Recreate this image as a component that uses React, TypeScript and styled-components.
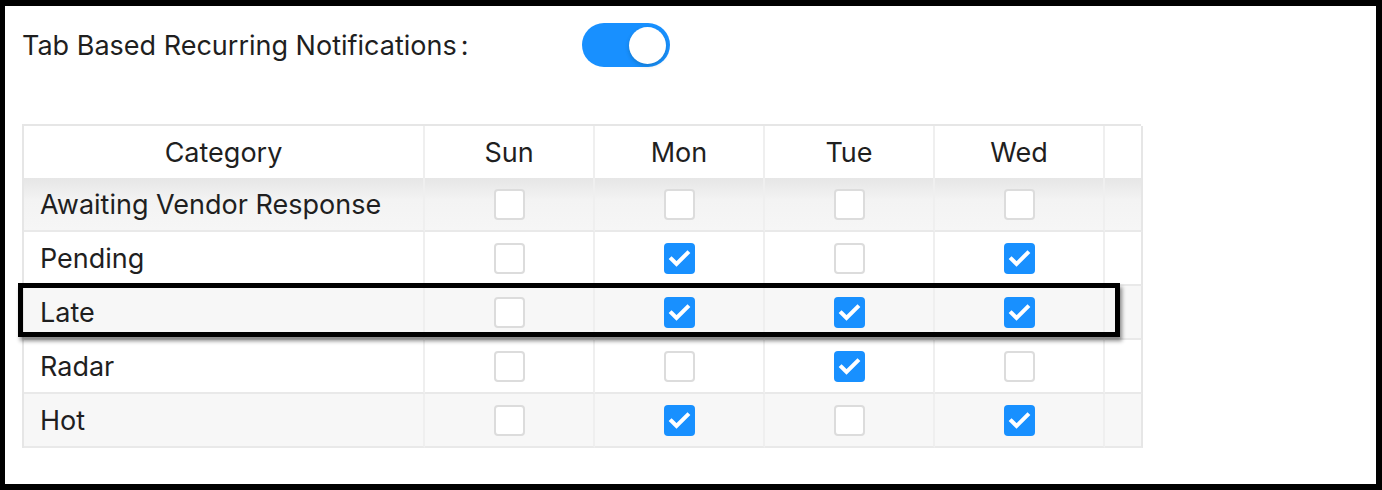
import React from "react";
import styled, { createGlobalStyle } from "styled-components";

const GlobalStyle = createGlobalStyle`
  html, body {
    margin: 0;
    padding: 0;
    background: #fff;
  }
  * {
    box-sizing: border-box;
  }
`;

const days = ["Sun", "Mon", "Tue", "Wed"];

const rows = [
  { name: "Awaiting Vendor Response", checks: [false, false, false, false] },
  { name: "Pending", checks: [false, true, false, true] },
  { name: "Late", checks: [false, true, true, true] },
  { name: "Radar", checks: [false, false, true, false] },
  { name: "Hot", checks: [false, true, false, true] },
];

const Checkbox: React.FC<{ checked: boolean }> = ({ checked }) => (
  <Box checked={checked}>
    {checked && (
      <svg width="31" height="31" viewBox="0 0 31 31">
        <polyline
          points="7.5,16 12.5,21 23.5,10"
          fill="none"
          stroke="#fff"
          strokeWidth="4"
          strokeLinecap="square"
        />
      </svg>
    )}
  </Box>
);

const App: React.FC = () => {
  return (
    <Frame>
      <GlobalStyle />
      <SettingRow>
        <Label>
          Tab Based Recurring Notifications<Colon>:</Colon>
        </Label>
        <Switch>
          <Knob />
        </Switch>
      </SettingRow>

      <TableWrap>
        <Grid>
          <HeadCell>Category</HeadCell>
          {days.map((d) => (
            <HeadCell key={d}>{d}</HeadCell>
          ))}
          <HeadCell last />

          {rows.map((r, i) => (
            <React.Fragment key={r.name}>
              <Cell striped={i % 2 === 0} first={i === 0} align="left">
                {r.name}
              </Cell>
              {r.checks.map((c, j) => (
                <Cell key={j} striped={i % 2 === 0} first={i === 0}>
                  <Checkbox checked={c} />
                </Cell>
              ))}
              <Cell striped={i % 2 === 0} first={i === 0} last />
            </React.Fragment>
          ))}
        </Grid>
        {/* annotation box drawn over the "Late" row */}
        <Highlight />
      </TableWrap>
    </Frame>
  );
};

export default App;

const Frame = styled.div`
  width: 1382px;
  height: 490px;
  border: 6px solid #000;
  border-left-width: 5px;
  background: #fff;
  padding: 17px 0 0 17px;
  font-family: Inter, "Liberation Sans", sans-serif;
  color: #1f1f1f;
`;

const SettingRow = styled.div`
  display: flex;
  align-items: center;
  height: 44px;
`;

const Label = styled.div`
  width: 560px;
  font-size: 27px;
  color: #1f1f1f;
`;

const Colon = styled.span`
  margin-left: 4px;
`;

const Switch = styled.div`
  width: 88px;
  height: 44px;
  border-radius: 22px;
  background: #1890ff;
  display: flex;
  align-items: center;
  justify-content: flex-end;
  padding-right: 4px;
`;

const Knob = styled.div`
  width: 37px;
  height: 37px;
  border-radius: 50%;
  background: #fff;
  box-shadow: 0 2px 4px rgba(0, 35, 11, 0.2);
`;

const TableWrap = styled.div`
  position: relative;
  margin-top: 57px;
  width: 1119px;
`;

const Grid = styled.div`
  display: grid;
  grid-template-columns: 401px repeat(4, 170px) 38px;
  border: 2px solid #e6e6e6;
  border-bottom: none;
  border-right: none;
`;

const HeadCell = styled.div<{ last?: boolean }>`
  height: 52px;
  display: flex;
  align-items: center;
  justify-content: center;
  font-size: 27px;
  color: #1f1f1f;
  background: #fff;
  border-right: 2px solid ${(p) => (p.last ? "#e6e6e6" : "#efefef")};
`;

const Cell = styled.div<{
  striped?: boolean;
  first?: boolean;
  last?: boolean;
  align?: "left" | "center";
}>`
  height: 54px;
  display: flex;
  align-items: center;
  justify-content: ${(p) => (p.align === "left" ? "flex-start" : "center")};
  padding-left: ${(p) => (p.align === "left" ? "16px" : "0")};
  font-size: 27px;
  color: #1f1f1f;
  background: ${(p) =>
    p.first
      ? "linear-gradient(#e6e6e6, #f3f3f3 22px, #f6f6f6)"
      : p.striped
      ? "#f7f7f7"
      : "#fff"};
  border-bottom: 2px solid #e9e9e9;
  border-right: 2px solid ${(p) => (p.last ? "#e6e6e6" : "#efefef")};
`;

const Box = styled.div<{ checked: boolean }>`
  width: 31px;
  height: 31px;
  border-radius: 4px;
  background: ${(p) => (p.checked ? "#1890ff" : "#fff")};
  border: ${(p) => (p.checked ? "none" : "2px solid #dcdcdc")};
  display: flex;
  svg {
    display: block;
  }
`;

const Highlight = styled.div`
  position: absolute;
  left: -4px;
  top: 159px;
  width: 1102px;
  height: 54px;
  border: 5px solid #000;
  box-shadow: 2px 4px 4px rgba(0, 0, 0, 0.45);
  pointer-events: none;
`;
